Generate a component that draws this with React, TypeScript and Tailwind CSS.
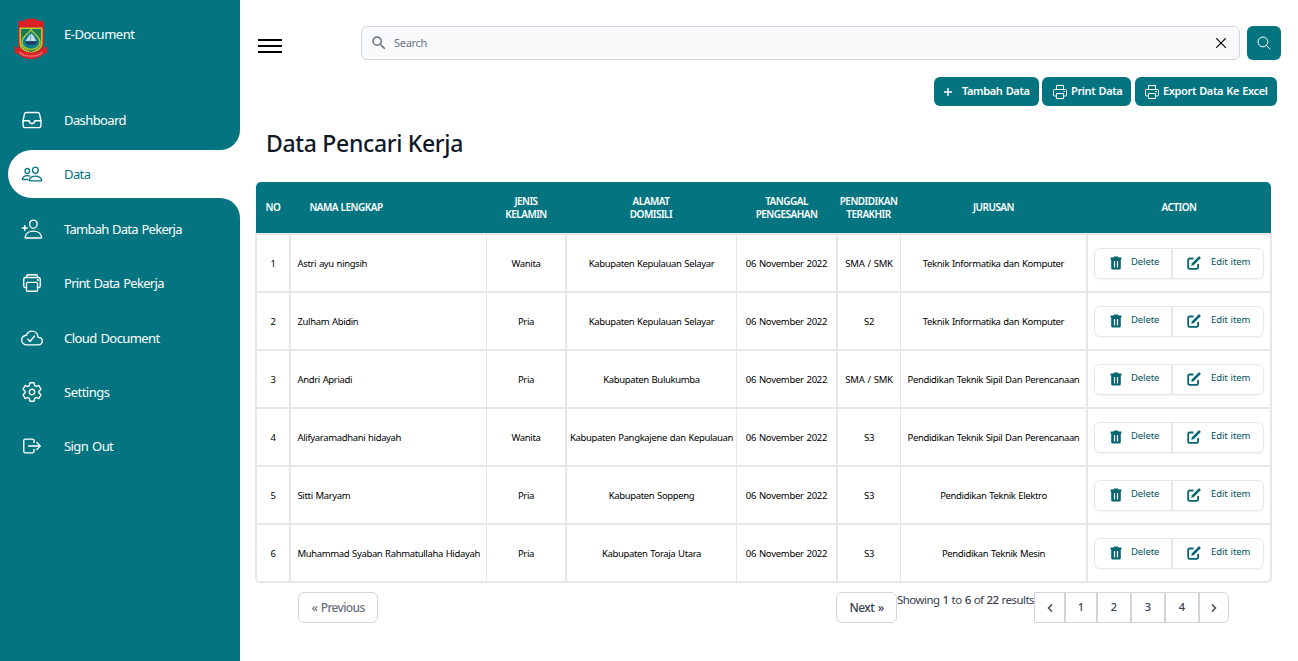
import React from "react";
import {
  IoFileTrayOutline,
  IoPeopleOutline,
  IoPersonAddOutline,
  IoPrintOutline,
  IoCloudDoneOutline,
  IoSettingsOutline,
  IoLogOutOutline,
  IoSearchOutline,
  IoCloseOutline,
} from "react-icons/io5";
import { MdSearch } from "react-icons/md";

const menu = [
  { label: "Dashboard", Icon: IoFileTrayOutline, track: "tracking-[-0.6px]" },
  { label: "Data", Icon: IoPeopleOutline, track: "tracking-[-0.6px]", active: true },
  { label: "Tambah Data Pekerja", Icon: IoPersonAddOutline, track: "tracking-[-0.75px]" },
  { label: "Print Data Pekerja", Icon: IoPrintOutline, track: "tracking-[-0.7px]" },
  { label: "Cloud Document", Icon: IoCloudDoneOutline, track: "tracking-[-0.57px]" },
  { label: "Settings", Icon: IoSettingsOutline, track: "tracking-[-0.5px]" },
  { label: "Sign Out", Icon: IoLogOutOutline, track: "tracking-[-0.57px]" },
];

const headers: string[][] = [
  ["NO"],
  ["NAMA LENGKAP"],
  ["JENIS", "KELAMIN"],
  ["ALAMAT", "DOMISILI"],
  ["TANGGAL", "PENGESAHAN"],
  ["PENDIDIKAN", "TERAKHIR"],
  ["JURUSAN"],
  ["ACTION"],
];

const rows = [
  ["Astri ayu ningsih", "Wanita", "Kabupaten Kepulauan Selayar", "SMA / SMK", "Teknik Informatika dan Komputer"],
  ["Zulham Abidin", "Pria", "Kabupaten Kepulauan Selayar", "S2", "Teknik Informatika dan Komputer"],
  ["Andri Apriadi", "Pria", "Kabupaten Bulukumba", "SMA / SMK", "Pendidikan Teknik Sipil Dan Perencanaan"],
  ["Alifyaramadhani hidayah", "Wanita", "Kabupaten Pangkajene dan Kepulauan", "S3", "Pendidikan Teknik Sipil Dan Perencanaan"],
  ["Sitti Maryam", "Pria", "Kabupaten Soppeng", "S3", "Pendidikan Teknik Elektro"],
  ["Muhammad Syaban Rahmatullaha Hidayah", "Pria", "Kabupaten Toraja Utara", "S3", "Pendidikan Teknik Mesin"],
];

const cell = "flex items-center justify-center border-[#e5e7eb] whitespace-nowrap";

function Logo() {
  return (
    <svg width="36" height="42" viewBox="0 0 36 42" className="shrink-0">
      <path d="M5 4 L8 2.5 L11 3 L13 1 L18 0.5 L23 1 L25 3 L28 2.5 L31 4 L30.500 10 L5.500 10 Z" fill="#dc2027" />
      <path d="M5 8.500 H31 V26 C31 33 24 36 18 38 C12 36 5 33 5 26 Z" fill="#c4262c" />
      <path d="M6.500 9.500 H29.500 V25 C29.500 31 24 33.500 18 35.500 C12 33.500 6.500 31 6.500 25 Z" fill="#c3c92e" />
      <path d="M8 11 H28 V24.500 C28 30 23 32 18 34 C13 32 8 30 8 24.500 Z" fill="#177a5a" />
      <path d="M18 11.500 C20 15.500 27 18 27 24 C27 29 22 31.500 18 31.500 C14 31.500 9 29 9 24 C9 18 16 15.500 18 11.500 Z" fill="#0b7f8e" stroke="#b5c62c" strokeWidth="1.400" />
      <path d="M17.500 15.500 L12.500 23 H17.500 Z M18 15.500 L20 17 L23.500 23 H18 Z" fill="#c9dcea" />
      <path d="M12 23.500 H24 L22.500 26.500 H14 Z" fill="#263a5e" />
      <path d="M0.500 28 L6 30.500 C9 33.500 13 34.500 18 34.500 C23 34.500 27 33.500 30 30.500 L35.500 28 L33.500 32.500 L35.500 34 L31 36 C27 39.500 23 41 18 41 C13 41 9 39.500 5 36 L0.500 34 L2.500 32.500 Z" fill="#dc2027" />
      <path d="M6.500 34 C9 37 13 38 18 38 C23 38 27 37 29.500 34" fill="none" stroke="#e98b8f" strokeWidth="1.600" strokeDasharray="1.400 0.700" />
    </svg>
  );
}

function PlusIcon() {
  return (
    <svg width="12" height="12" viewBox="0 0 12 12" fill="none" stroke="currentColor" strokeWidth="1.400" className="shrink-0">
      <path d="M2 6 H10 M6 2 V10" />
    </svg>
  );
}

function PrinterIcon() {
  return (
    <svg width="14" height="14" viewBox="0 0 14 14" fill="none" stroke="currentColor" strokeWidth="1" className="shrink-0">
      <path d="M3.500 4.500 V0.500 H10.500 V4.500" />
      <path d="M3.500 11 H1.500 A1 1 0 0 1 0.500 10 V5.500 A1 1 0 0 1 1.500 4.500 H12.500 A1 1 0 0 1 13.500 5.500 V10 A1 1 0 0 1 12.500 11 H10.500" />
      <path d="M3.500 8.500 H10.500 V13.500 H3.500 Z" />
      <path d="M10.500 6.500 H12" />
    </svg>
  );
}

function TrashIcon() {
  return (
    <svg width="12" height="14" viewBox="0 0 12 14" className="-mt-0.5 shrink-0">
      <path
        fill="#036672"
        fillRule="evenodd"
        d="M4 0.500 H8 L8.500 1.500 H11.500 V3.400 H0.500 V1.500 H3.500 Z M1.200 3.400 H10.800 V12 A1.500 1.500 0 0 1 9.300 13.500 H2.700 A1.500 1.500 0 0 1 1.200 12 Z M3.900 5 V11.500 H5.100 V5 Z M6.900 5 V11.500 H8.100 V5 Z"
      />
    </svg>
  );
}

function EditIcon() {
  return (
    <svg width="14" height="14" viewBox="0 0 14 14" fill="none" className="-mt-0.5 shrink-0">
      <path d="M6.500 2.500 H2.500 A1.300 1.300 0 0 0 1.200 3.800 V11.500 A1.300 1.300 0 0 0 2.500 12.800 H9.800 A1.300 1.300 0 0 0 11.100 11.500 V8" stroke="#036672" strokeWidth="1.800" />
      <path d="M4.300 9.700 L4.700 7.500 L11.400 0.700 A1.100 1.100 0 0 1 12.900 0.700 L13.300 1.100 A1.100 1.100 0 0 1 13.300 2.600 L6.600 9.300 Z" fill="#036672" />
    </svg>
  );
}

function Chevron({ right }: { right?: boolean }) {
  return (
    <svg width="6" height="8" viewBox="0 0 6 8" fill="none" stroke="#4b5563" strokeWidth="1.600">
      <path d={right ? "M1 0.500 L4.500 4 L1 7.500" : "M5 0.500 L1.500 4 L5 7.500"} />
    </svg>
  );
}

function Sidebar() {
  return (
    <aside className="h-[661px] w-[240px] shrink-0 bg-[#047481] pt-[18px] text-white">
      <div className="flex h-[78px] items-start pl-[13px]">
        <Logo />
        <span className="ml-[15px] mt-[6px] text-[13px] leading-5 tracking-[-0.480px]">E-Document</span>
      </div>
      <nav className="flex flex-col gap-[6.400px] pl-2 [word-spacing:1px]">
        {menu.map(({ label, Icon, track, active }) => (
          <div
            key={label}
            className={
              active
                ? "relative flex h-12 items-center rounded-l-[24px] bg-white pl-3 text-[#047481]"
                : "flex h-12 items-center pl-3"
            }
          >
            {active && (
              <>
                <span className="absolute -top-5 right-0 size-5 bg-white">
                  <span className="block size-5 rounded-br-[20px] bg-[#047481]" />
                </span>
                <span className="absolute -bottom-5 right-0 size-5 bg-white">
                  <span className="block size-5 rounded-tr-[20px] bg-[#047481]" />
                </span>
              </>
            )}
            <Icon className="mx-px size-[22px] shrink-0" />
            <span className={`ml-5 text-[13px] leading-5 whitespace-nowrap ${track}`}>{label}</span>
          </div>
        ))}
      </nav>
    </aside>
  );
}

function DataTable() {
  const grid = "grid grid-cols-[34px_196px_80px_170px_101px_63px_187px_184px]";
  return (
    <section className="mt-[22px] ml-[15px] w-[1017px]">
      <div className="mx-px overflow-hidden rounded-t-[5px] bg-[#047481]">
        <div className={`${grid} -mr-px h-[51px]`}>
          {headers.map((lines, i) => (
            <div
              key={i}
              className={`flex flex-col justify-center text-center text-[10px] leading-[13px] font-semibold tracking-[-0.520px] whitespace-nowrap text-white [word-spacing:0.500px] ${i === 1 ? "pr-[84px]" : ""}`}
            >
              {lines.map((l) => (
                <span key={l}>{l}</span>
              ))}
            </div>
          ))}
        </div>
      </div>
      <div className="overflow-hidden rounded-b-[5px] border-t-2 border-l-2 border-[#e5e7eb] text-[9.500px] tracking-[-0.350px] text-black [word-spacing:0.600px]">
        {rows.map(([name, sex, addr, edu, major], i) => (
          <div key={name} className={`${grid} h-[58px] *:pt-[2px]`}>
            <div className={`${cell} border-r-2 border-b-2`}>{i + 1}</div>
            <div className={`${cell} justify-start! border-r border-b-2 pl-[6.500px]`}>{name}</div>
            <div className={`${cell} border-r-2 border-b-2`}>{sex}</div>
            <div className={`${cell} border-r border-b-2`}>{addr}</div>
            <div className={`${cell} border-r-2 border-b-2 tracking-[-0.270px]`}>06 November 2022</div>
            <div className={`${cell} border-r border-b-2 tracking-[-0.200px]`}>{edu}</div>
            <div className={`${cell} border-r-2 border-b-2`}>{major}</div>
            <div className={`${cell} border-r-2 border-b-2 pt-px! ${i === 5 ? "rounded-br-[5px]" : ""}`}>
              <div className="flex h-[31px] w-[170px] rounded-md border border-[#e5e7eb] text-[9.500px] tracking-[-0.100px] text-[#05505c] shadow-xs">
                <div className="flex w-[78px] items-center border-r-2 border-[#e5e7eb] pl-[15px]">
                  <TrashIcon />
                  <span className="-mt-[3px] ml-[9px]">Delete</span>
                </div>
                <div className="flex items-center pl-[14px]">
                  <EditIcon />
                  <span className="-mt-[3px] ml-[10px]">Edit item</span>
                </div>
              </div>
            </div>
          </div>
        ))}
      </div>
    </section>
  );
}

function Pagination() {
  const page = "flex items-center justify-center border-r-2 border-[#d1d5db]";
  return (
    <div className="mt-[9px] ml-[58px] flex items-start text-[12px] font-medium text-[#374151]">
      <button className="h-[31px] w-[80px] rounded-md border border-[#d1d5db] pt-px tracking-[-0.650px] text-[#6b7280] [word-spacing:1px]">« Previous</button>
      <button className="ml-[458px] h-[31px] w-[61px] rounded-md border border-[#d1d5db] pt-px tracking-[-0.600px] [word-spacing:1px]">Next »</button>
      <p className="w-[137px] text-[11.500px] leading-4 font-normal tracking-[-0.530px] whitespace-nowrap [word-spacing:0.500px]">
        Showing <span className="font-medium">1</span> to <span className="font-medium">6</span> of <span className="font-medium">22</span> results
      </p>
      <div className="grid h-[31px] w-[195px] grid-cols-[31px_32px_34px_34px_34px_28px] overflow-hidden rounded-r-md border border-[#d1d5db] text-[11px]">
        <span className={page}><Chevron /></span>
        <span className={page}>1</span>
        <span className={page}>2</span>
        <span className={page}>3</span>
        <span className={page}>4</span>
        <span className="flex items-center justify-center"><Chevron right /></span>
      </div>
    </div>
  );
}

export default function App() {
  const btn = "flex h-[29px] items-center rounded-md bg-[#047481] text-[11px] font-semibold whitespace-nowrap text-white tracking-[-0.370px] [word-spacing:0.700px]";
  return (
    <div className="flex h-[661px] w-[1298px] overflow-hidden bg-white font-['Noto_Sans',sans-serif]">
      <Sidebar />
      <main className="flex flex-1 flex-col pt-[26px]">
        <div className="flex">
          <div className="mt-[13px] ml-[18px] flex w-6 flex-col gap-1">
            <span className="h-[2px] bg-black" />
            <span className="h-[2px] bg-black" />
            <span className="h-[2px] bg-black" />
          </div>
          <div className="ml-[79px] flex h-[34px] w-[879px] items-center rounded-md border border-[#d1d5db] bg-[#f9fafb] pr-2 pl-[8px] text-[11px] tracking-[-0.300px] text-[#6b7280]">
            <MdSearch className="size-[18px]" />
            <span className="ml-[6px] flex-1">Search</span>
            <IoCloseOutline className="size-5 text-black" />
          </div>
          <button className="ml-[7px] flex size-[34px] items-center justify-center rounded-md bg-[#047481] text-white">
            <IoSearchOutline className="size-4" />
          </button>
        </div>
        <div className="mt-[17px] flex pl-[694px]">
          <button className={`${btn} w-[105px] pl-2`}>
            <PlusIcon />
            <span className="ml-2">Tambah Data</span>
          </button>
          <button className={`${btn} ml-[3px] w-[89px] pl-[11px]`}>
            <PrinterIcon />
            <span className="ml-1">Print Data</span>
          </button>
          <button className={`${btn} ml-1 w-[142px] pl-[10px]`}>
            <PrinterIcon />
            <span className="ml-1">Export Data Ke Excel</span>
          </button>
        </div>
        <h1 className="mt-[21px] mb-px ml-[26px] text-[23px] leading-8 font-medium tracking-[-0.320px] text-[#111827]">Data Pencari Kerja</h1>
        <DataTable />
        <Pagination />
      </main>
    </div>
  );
}
